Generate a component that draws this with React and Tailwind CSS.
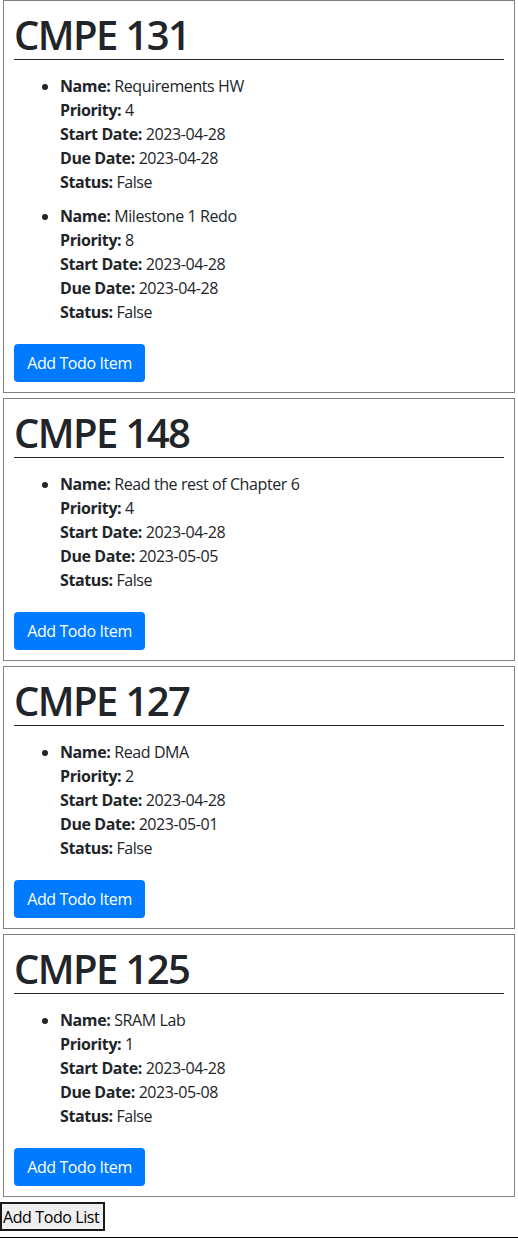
const lists = [
  {
    title: "CMPE 131",
    items: [
      { name: "Requirements HW", priority: 4, start: "2023-04-28", due: "2023-04-28", status: "False" },
      { name: "Milestone 1 Redo", priority: 8, start: "2023-04-28", due: "2023-04-28", status: "False" },
    ],
  },
  {
    title: "CMPE 148",
    items: [
      { name: "Read the rest of Chapter 6", priority: 4, start: "2023-04-28", due: "2023-05-05", status: "False" },
    ],
  },
  {
    title: "CMPE 127",
    items: [
      { name: "Read DMA", priority: 2, start: "2023-04-28", due: "2023-05-01", status: "False" },
    ],
  },
  {
    title: "CMPE 125",
    items: [
      { name: "SRAM Lab", priority: 1, start: "2023-04-28", due: "2023-05-08", status: "False" },
    ],
  },
];

function Row({ label, value }) {
  return (
    <div className="h-6 leading-6">
      <strong className="font-bold">{label}:</strong> {value}
    </div>
  );
}

export default function App() {
  return (
    <div
      className="bg-white text-[16px] tracking-[-0.4px] text-[#212529]"
      style={{ fontFamily: '"Segoe UI", "Open Sans", "Noto Sans", sans-serif' }}
    >
      <div className="flex flex-col gap-[5px]">
        {lists.map((list) => (
          <section key={list.title} className="mx-[3px] border border-[#808080] p-[10px]">
            <h1 className="h-[49px] border-b border-[#212529] text-[40px] font-semibold leading-[48px] tracking-[-1.6px]">
              {list.title}
            </h1>
            <ul className="mt-[14px] mb-[20px] flex list-disc flex-col gap-[10px] pl-[46px]">
              {list.items.map((item) => (
                <li key={item.name}>
                  <Row label="Name" value={item.name} />
                  <Row label="Priority" value={item.priority} />
                  <Row label="Start Date" value={item.start} />
                  <Row label="Due Date" value={item.due} />
                  <Row label="Status" value={item.status} />
                </li>
              ))}
            </ul>
            <button className="h-[38px] w-[131px] rounded-[4px] bg-[#007bff] text-white">
              Add Todo Item
            </button>
          </section>
        ))}
      </div>
      <div className="mt-[5px]">
        <button className="h-[29px] w-[105px] border-2 border-[#1a1a1a] bg-[#efefef] px-[1px] text-left leading-none text-black">
          Add Todo List
        </button>
      </div>
      <div className="mt-[6px] border-t border-black" />
    </div>
  );
}
